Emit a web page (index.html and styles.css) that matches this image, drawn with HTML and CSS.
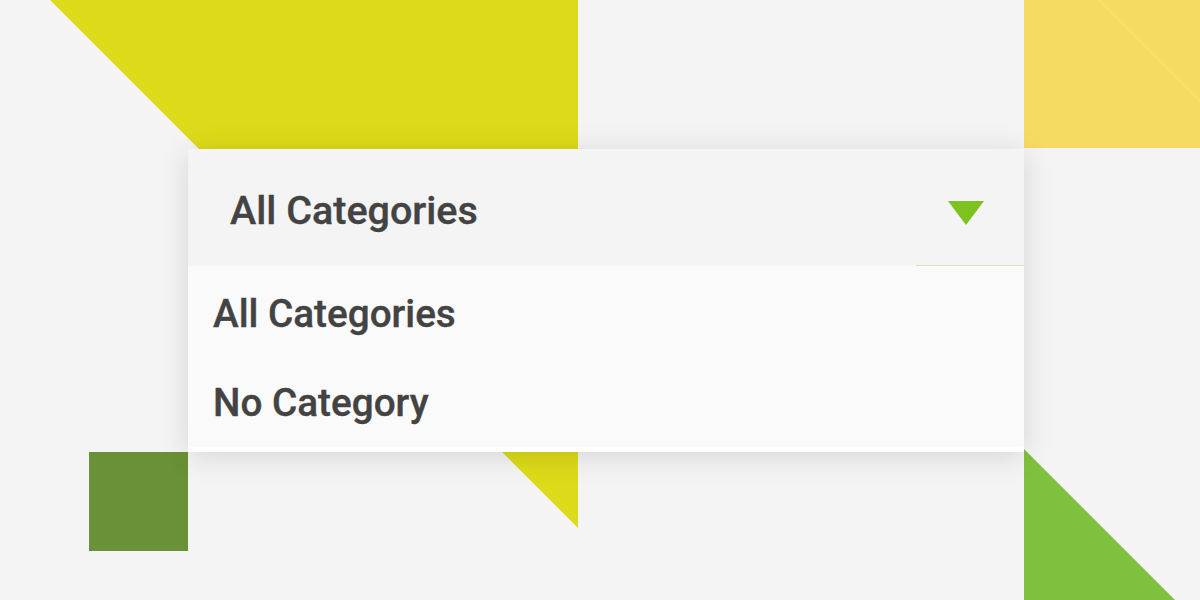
FILE: index.html
```html
<!DOCTYPE html>
<html lang="en">
<head>
<meta charset="utf-8">
<title>Category dropdown</title>
<link rel="stylesheet" href="styles.css">
</head>
<body>
<div class="stage">
  <svg class="shapes" width="1200" height="600" viewBox="0 0 1200 600" aria-hidden="true">
    <polygon points="50,0 578,0 578,528" fill="#dcdb19"/>
    <rect x="89" y="452" width="99" height="99" fill="#6a9137"/>
    <rect x="1024" y="0" width="176" height="148" fill="#f7da62"/>
    <line x1="1099" y1="0" x2="1200" y2="101" stroke="#fbe796" stroke-width="0.6"/>
    <polygon points="1024,449 1175,600 1024,600" fill="#80c03f"/>
  </svg>
  <div class="dropdown">
    <div class="dropdown-head">
      <span class="dropdown-value">All Categories</span>
      <svg class="caret" width="36" height="24" viewBox="0 0 36 24" aria-hidden="true">
        <polygon points="0,0 36,0 18,24" fill="#7dc21e"/>
      </svg>
      <span class="head-line"></span>
    </div>
    <ul class="dropdown-list">
      <li class="dropdown-item">All Categories</li>
      <li class="dropdown-item">No Category</li>
    </ul>
  </div>
</div>
</body>
</html>
```
FILE: styles.css
```css
html, body {
  margin: 0;
  padding: 0;
}
body {
  background: #f4f4f4;
  font-family: Roboto, "Liberation Sans", sans-serif;
}
.stage {
  position: relative;
  width: 1200px;
  height: 600px;
  overflow: hidden;
  box-sizing: border-box;
  padding: 149px 0 0 188px;
}
.shapes {
  position: absolute;
  left: 0;
  top: 0;
}
.dropdown {
  position: relative;
  width: 836px;
  background: #ffffff;
  padding-bottom: 5px;
  box-shadow: 0 4px 28px rgba(0, 0, 0, 0.13);
}
.dropdown-head {
  position: relative;
  height: 117px;
  box-sizing: border-box;
  padding: 6px 40px 0 42px;
  display: flex;
  align-items: center;
  justify-content: space-between;
  background: #f4f4f4;
}
.dropdown-value {
  font-size: 39.5px;
  line-height: 40px;
  font-weight: 500;
  color: #434343;
  -webkit-text-stroke: 0.35px #434343;
}
.caret {
  display: block;
  margin-top: 4px;
}
.head-line {
  position: absolute;
  right: 0;
  bottom: 0;
  width: 108px;
  height: 1px;
  background: #cde8ab;
}
.dropdown-list {
  list-style: none;
  margin: 0;
  padding: 0 0 3px 0;
  background: #fafafa;
  border-radius: 0 0 4px 4px;
}
.dropdown-item {
  padding: 28px 0 21px 25px;
  font-size: 38.7px;
  line-height: 40px;
  font-weight: 500;
  color: #434343;
  -webkit-text-stroke: 0.35px #434343;
}
```
